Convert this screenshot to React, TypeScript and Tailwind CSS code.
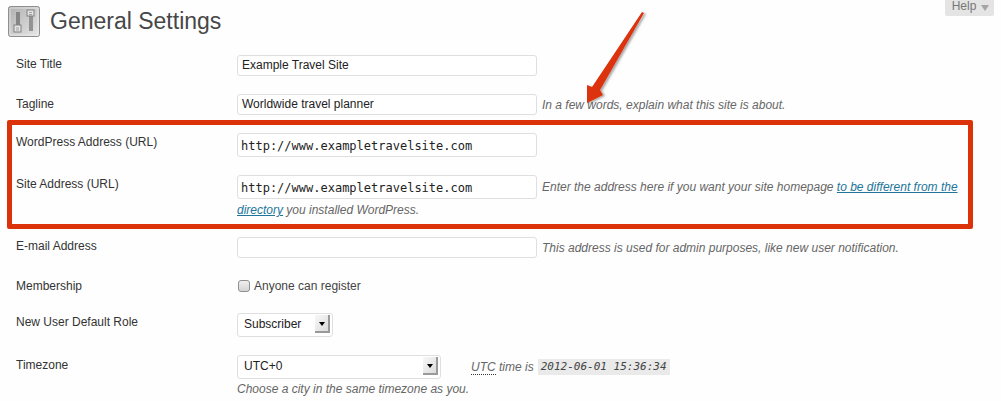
import type { ReactNode } from 'react'

const inputBox = 'h-[21px] w-[300px] rounded-[3px] border border-[#dfdfdf] bg-white px-[4px] pb-[1px] text-[12px] text-[#222] flex items-center'
const monoBox = "h-[24px] w-[300px] rounded-[3px] border border-[#dfdfdf] bg-white px-[3px] pt-[2px] text-[12px] text-[#222] flex items-center font-['DejaVu_Sans_Mono',monospace]"
const selectBox = 'flex h-[24px] items-center justify-between rounded-[3px] border border-[#dfdfdf] bg-white pl-[6px] pr-[1px] text-[12px] text-[#222]'
const hint = 'italic text-[12px] text-[#666]'

function SettingsIcon() {
  return (
    <svg width="32" height="31" viewBox="0 0 32 31" className="shrink-0">
      <defs>
        <linearGradient id="tile" x1="0" y1="0" x2="1" y2="1">
          <stop offset="0" stopColor="#b0b0b0" />
          <stop offset="1" stopColor="#e6e6e6" />
        </linearGradient>
      </defs>
      <rect x="0.5" y="0.5" width="31" height="30" rx="2" fill="url(#tile)" stroke="#8e8e8e" />
      <rect x="2" y="2" width="28" height="27" rx="1" fill="none" stroke="#efefef" strokeOpacity="0.7" />
      <rect x="8" y="6" width="4" height="19" fill="#858585" />
      <rect x="21" y="6" width="4" height="19" fill="#929292" />
      <rect x="6" y="19" width="7" height="7" fill="#e4e4e4" stroke="#808080" />
      <line x1="8" y1="22" x2="11" y2="22" stroke="#a0a0a0" />
      <line x1="8" y1="24" x2="11" y2="24" stroke="#a0a0a0" />
      <rect x="19" y="4" width="7" height="6" fill="#e4e4e4" stroke="#808080" />
      <line x1="21" y1="6.5" x2="24" y2="6.5" stroke="#a0a0a0" />
      <line x1="21" y1="8.5" x2="24" y2="8.5" stroke="#a0a0a0" />
    </svg>
  )
}

function SelectArrow() {
  return (
    <span className="mb-[2px] mr-[1px] flex h-[18px] w-[15px] items-center justify-center border-r-2 border-b-2 border-[#9a9a9a] bg-gradient-to-br from-[#f8f8f8] to-[#dcdcdc]">
      <span className="mt-[2px] h-0 w-0 border-x-[3px] border-t-[4px] border-x-transparent border-t-black" />
    </span>
  )
}

function Row({ label, className, labelClass, children }: { label: string; className: string; labelClass: string; children: ReactNode }) {
  return (
    <div className={`flex ${className}`}>
      <div className={`w-[221px] shrink-0 text-[12px] leading-[16px] text-[#333] ${labelClass}`}>{label}</div>
      <div className="min-w-0 flex-1">{children}</div>
    </div>
  )
}

export default function App() {
  return (
    <div className="relative h-[401px] w-[1001px] overflow-hidden bg-[#fefefe] font-['Liberation_Sans',Arial,sans-serif]">
      <div className="absolute right-[7px] top-0 flex h-[16px] w-[49px] items-center justify-center gap-[5px] rounded-b-[2px] bg-[#e4e4e4] pl-[2px] text-[12px] text-[#777]">
        <span className="-mt-[4px]">Help</span>
        <span className="h-0 w-0 border-x-[4px] border-t-[6px] border-x-transparent border-t-[#a5a5a5]" />
      </div>

      <div className="flex items-center pl-[8px] pt-[6px]">
        <SettingsIcon />
        <h1 className="ml-[10px] text-[23px] leading-[31px] text-[#474747]">General Settings</h1>
      </div>

      <div className="pl-[16px] pt-[18px]">
        <Row label="Site Title" className="h-[39px]" labelClass="pt-[1px]">
          <div className={inputBox}>Example Travel Site</div>
        </Row>
        <Row label="Tagline" className="h-[39px]" labelClass="pt-[2px]">
          <div className="flex items-center">
            <div className={inputBox}>Worldwide travel planner</div>
            <span className={`ml-[5px] ${hint}`}>In a few words, explain what this site is about.</span>
          </div>
        </Row>
        <Row label="WordPress Address (URL)" className="h-[42px]" labelClass="pt-[1px]">
          <div className={monoBox}>http://www.exampletravelsite.com</div>
        </Row>
        <Row label="Site Address (URL)" className="h-[62px]" labelClass="pt-[1px]">
          <div className="flex items-center">
            <div className={monoBox}>http://www.exampletravelsite.com</div>
            <span className={`ml-[5px] ${hint}`}>
              Enter the address here if you want your site homepage <span className="text-[#21759b] underline">to be different from the</span>
            </span>
          </div>
          <div className={`mt-[3px] leading-[16px] ${hint}`}>
            <span className="text-[#21759b] underline">directory</span> you installed WordPress.
          </div>
        </Row>
        <Row label="E-mail Address" className="h-[40px]" labelClass="pt-[1px]">
          <div className="flex items-center">
            <div className={inputBox} />
            <span className={`ml-[5px] ${hint}`}>This address is used for admin purposes, like new user notification.</span>
          </div>
        </Row>
        <Row label="Membership" className="h-[36px] pt-[1px]" labelClass="">
          <label className="flex items-center text-[12px] leading-[16px] text-[#444]">
            <span className="ml-[1px] h-[12px] w-[12px] rounded-[3px] border border-[#8f8f8f] bg-gradient-to-b from-[#f0f0f0] to-[#d4d4d4]" />
            <span className="ml-[4px]">Anyone can register</span>
          </label>
        </Row>
        <Row label="New User Default Role" className="h-[42px]" labelClass="pt-[1px]">
          <div className={`${selectBox} w-[96px]`}>
            <span className="-mt-[2px]">Subscriber</span>
            <SelectArrow />
          </div>
        </Row>
        <Row label="Timezone" className="h-[46px]" labelClass="pt-[2px]">
          <div className="flex items-center">
            <div className={`${selectBox} w-[204px]`}>
              <span className="-mt-[2px]">UTC+0</span>
              <SelectArrow />
            </div>
            <span className={`ml-[30px] ${hint}`}>
              <span className="border-b border-dotted border-[#333]">UTC</span> time is
            </span>
            <span className="ml-[4px] bg-[#eaeaea] px-[3px] font-['DejaVu_Sans_Mono',monospace] text-[11px] italic leading-[16px] text-[#444]">
              2012-06-01 15:36:34
            </span>
          </div>
          <div className={`mt-[2px] leading-[16px] ${hint}`}>Choose a city in the same timezone as you.</div>
        </Row>
      </div>

      <div className="pointer-events-none absolute left-[7px] top-[120px] h-[109px] w-[966px] rounded-[2px] border-[5px] border-[#dc3209]" />
      <svg className="pointer-events-none absolute left-[580px] top-[8px]" width="70" height="100" viewBox="0 0 70 100">
        <defs>
          <filter id="arrowShadow" x="-30%" y="-10%" width="160%" height="120%">
            <feDropShadow dx="2" dy="1" stdDeviation="1.2" floodColor="#000" floodOpacity="0.35" />
          </filter>
        </defs>
        <path d="M62 4 L64 5 L20 82 L23 87 L7 95 L7 77 L12 79 Z" fill="#dc3209" filter="url(#arrowShadow)" />
      </svg>
    </div>
  )
}
